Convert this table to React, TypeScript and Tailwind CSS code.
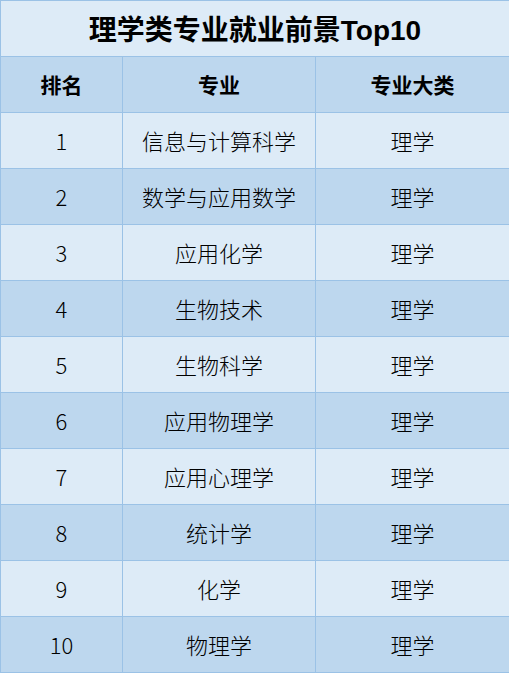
const rows = [
  ["1", "信息与计算科学", "理学"],
  ["2", "数学与应用数学", "理学"],
  ["3", "应用化学", "理学"],
  ["4", "生物技术", "理学"],
  ["5", "生物科学", "理学"],
  ["6", "应用物理学", "理学"],
  ["7", "应用心理学", "理学"],
  ["8", "统计学", "理学"],
  ["9", "化学", "理学"],
  ["10", "物理学", "理学"],
];

const font = { fontFamily: '"Liberation Sans", "Noto Sans CJK SC", sans-serif' };
const bodyFont = { fontFamily: '"Noto Sans CJK SC", "Liberation Sans", sans-serif' };

export default function App() {
  return (
    <div className="w-[509px] bg-[#ddebf7] text-black" style={font}>
      <div className="grid grid-cols-[122px_193px_194px] border-l border-t border-[#9bc2e6]">
        <div className="col-span-3 h-[56px] pt-[4px] flex items-center justify-center border-r border-b border-[#9bc2e6] bg-[#ddebf7] text-[28px] font-bold">
          理学类专业就业前景Top10
        </div>
        {["排名", "专业", "专业大类"].map((h) => (
          <div
            key={h}
            className="h-[56px] pt-[3px] flex items-center justify-center border-r border-b border-[#9bc2e6] bg-[#bdd7ee] text-[21px] font-bold"
          >
            {h}
          </div>
        ))}
        {rows.map((r, i) =>
          r.map((c, j) => (
            <div
              key={i + "-" + j}
              style={bodyFont}
              className={
                "h-[56px] flex items-center justify-center border-r border-b border-[#9bc2e6] text-[22px] font-light " +
                (i % 2 === 0 ? "bg-[#ddebf7]" : "bg-[#bdd7ee]")
              }
            >
              {c}
            </div>
          ))
        )}
      </div>
    </div>
  );
}
